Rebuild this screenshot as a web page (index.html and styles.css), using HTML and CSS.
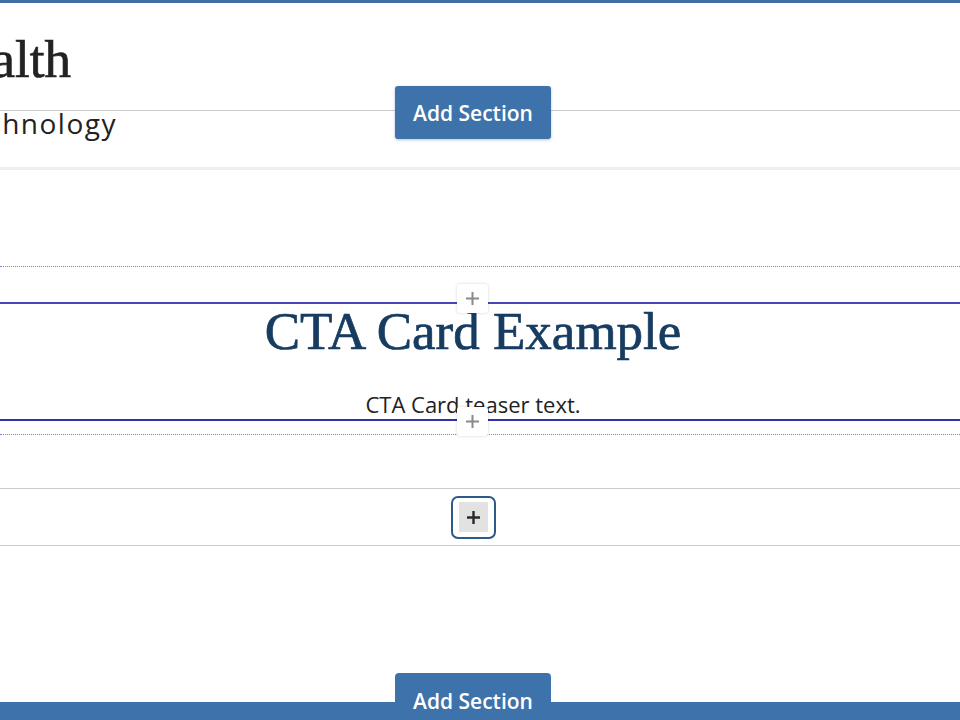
FILE: index.html
```html
<!DOCTYPE html>
<html lang="en">
<head>
<meta charset="utf-8">
<title>Page editor</title>
<link rel="stylesheet" href="styles.css">
</head>
<body>
<div class="topbar"></div>
<header class="site-header">
  <div class="brand"><span class="brand-title">Health</span></div>
  <nav class="subnav"><span class="subnav-item">Technology</span></nav>
  <button class="add-section add-section-top" type="button">Add Section</button>
</header>

<main class="region">
  <div class="layout">
    <div class="block">
      <button class="insert insert-before" type="button" aria-label="Add block before">
        <svg width="15" height="15" viewBox="0 0 15 15"><path d="M7.5 1v13M1 7.5h13" stroke="#8a8a8a" stroke-width="2" fill="none"/></svg>
      </button>
      <h2 class="cta-title">CTA Card Example</h2>
      <p class="cta-text">CTA Card teaser text.</p>
      <button class="insert insert-after" type="button" aria-label="Add block after">
        <svg width="15" height="15" viewBox="0 0 15 15"><path d="M7.5 1v13M1 7.5h13" stroke="#8a8a8a" stroke-width="2" fill="none"/></svg>
      </button>
    </div>
  </div>
  <div class="add-block">
    <button class="add-block-btn" type="button" aria-label="Add block">
      <span class="add-block-inner">
        <svg width="15" height="15" viewBox="0 0 15 15"><path d="M7.5 1v13M1 7.5h13" stroke="#2a2a2a" stroke-width="2.4" fill="none"/></svg>
      </span>
    </button>
  </div>
</main>

<footer class="footer-bar">
  <button class="add-section add-section-tab" type="button">Add Section</button>
</footer>
</body>
</html>
```

FILE: styles.css
```css
* { box-sizing: border-box; }

html, body {
  margin: 0;
  padding: 0;
  background: #ffffff;
  overflow: hidden;
}

body {
  width: 960px;
  height: 720px;
  font-family: "Open Sans", "Noto Sans", sans-serif;
  color: #222222;
  position: relative;
}

.topbar {
  height: 3px;
  background: #3d6fa3;
}

.site-header {
  position: relative;
  border-bottom: 3px solid #eeeeee;
}

.brand {
  height: 107px;
  padding-top: 26px;
  width: 71px;
  display: flex;
  justify-content: flex-end;
  white-space: nowrap;
}

.brand-title {
  font-family: "Liberation Serif", "Times New Roman", serif;
  font-size: 53px;
  line-height: 60px;
  color: #222222;
  -webkit-text-stroke: 0.7px #222222;
}

.subnav {
  border-top: 1px solid #cccccc;
  height: 57px;
  width: 960px;
}

.subnav-item {
  display: flex;
  justify-content: flex-end;
  width: 117px;
  white-space: nowrap;
  font-size: 28px;
  line-height: 24px;
  letter-spacing: 1.5px;
  margin-right: -1.5px;
  color: #222222;
}

.add-section {
  width: 156px;
  height: 53px;
  border: 0;
  background: #3e72aa;
  color: #ffffff;
  font-family: "Open Sans", "Noto Sans", sans-serif;
  font-size: 21px;
  font-weight: 600;
  padding: 0;
  cursor: pointer;
}

.add-section-top {
  position: absolute;
  left: 395px;
  top: 83px;
  border-radius: 3px;
  box-shadow: 0 1px 3px rgba(40, 80, 140, 0.35);
}

.region {
  padding-top: 96px;
}

.layout {
  border-top: 1px dotted #7f7fd0;
  border-bottom: 1px dotted #7f7fd0;
  padding: 35px 0 13px;
}

.block {
  position: relative;
  border-top: 2px solid #4646b8;
  border-bottom: 2px solid #3030a8;
  text-align: center;
  padding-right: 14px;
}

.cta-title {
  margin: 0;
  font-family: "Liberation Serif", "Times New Roman", serif;
  font-weight: 400;
  font-size: 53px;
  line-height: 55px;
  color: #173c60;
  -webkit-text-stroke: 0.7px #173c60;
}

.cta-text {
  margin: 30px 0 0;
  font-size: 22px;
  line-height: 30px;
  color: #222222;
}

.insert {
  position: absolute;
  left: 457px;
  width: 31px;
  height: 29px;
  padding: 0;
  border: 0;
  border-radius: 3px;
  background: #ffffff;
  box-shadow: 0 0 3px rgba(0, 0, 0, 0.18);
  display: flex;
  align-items: center;
  justify-content: center;
}

.insert-before { top: -20px; }
.insert-after { bottom: -17px; }

.add-block {
  margin-top: 53px;
  border-top: 1px solid #cccccc;
  border-bottom: 1px solid #cccccc;
  height: 58px;
  display: flex;
  align-items: center;
  padding-right: 14px;
  justify-content: center;
}

.add-block-btn {
  width: 45px;
  height: 43px;
  padding: 0;
  border: 2px solid #2e5a8a;
  border-radius: 7px;
  background: #ffffff;
  display: flex;
  align-items: center;
  justify-content: center;
}

.add-block-inner {
  width: 29px;
  height: 30px;
  background: #e2e2e2;
  display: flex;
  align-items: center;
  justify-content: center;
}

.footer-bar {
  position: relative;
  margin-top: 156px;
  height: 20px;
  background: #3e72aa;
}

.add-section-tab {
  position: absolute;
  left: 395px;
  top: -29px;
  border-radius: 4px 4px 0 0;
  padding-top: 2px;
}
```
